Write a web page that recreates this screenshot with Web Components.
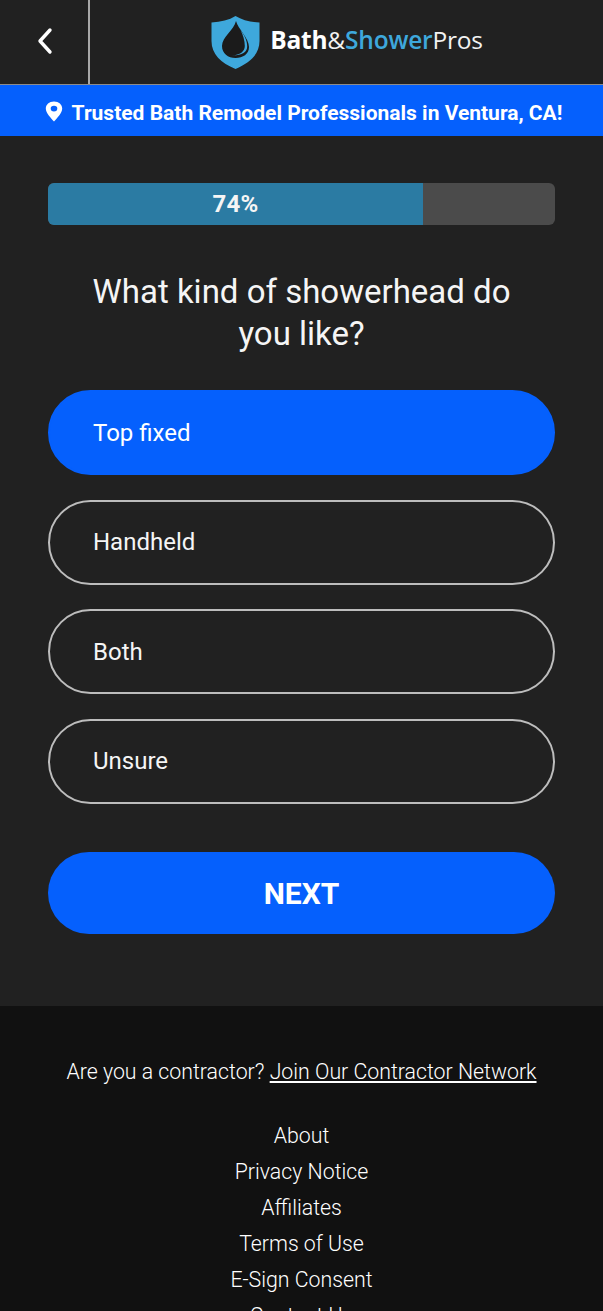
<!DOCTYPE html>
<html>
<head>
<meta charset="utf-8">
<title>Bath & Shower Pros</title>
<style>
    html, body{ margin: 0; height: 100%; overflow: hidden; background: #212121; }
    body{ font-family: Roboto, "Liberation Sans", sans-serif; color: #fff; }
</style>
</head>
<body>
<site-header></site-header>
<trust-banner>Trusted Bath Remodel Professionals in Ventura, CA!</trust-banner>
<quiz-step percent="74" question="What kind of showerhead do you like?">
    <quiz-option selected>Top fixed</quiz-option>
    <quiz-option>Handheld</quiz-option>
    <quiz-option>Both</quiz-option>
    <quiz-option>Unsure</quiz-option>
</quiz-step>
<site-footer></site-footer>

<script>
const templateHeader = document.createElement('template');
templateHeader.innerHTML = `
    <style>
        :host{
            display: grid;
            grid-template-columns: 90px 1fr;
            height: 84px;
            background: #212121;
            border-bottom: 1px solid #8b8b8b;
        }
        #back{
            display: flex;
            align-items: center;
            justify-content: center;
            padding: 0 0 3px 1px;
            border-right: 2px solid #a8a8a8;
        }
        #logo{
            display: flex;
            align-items: center;
            justify-content: center;
            gap: 10px;
            padding-left: 1px;
            font-family: "Open Sans", sans-serif;
            font-size: 24.5px;
            letter-spacing: -0.2px;
            color: #f2f2f2;
        }
        #name{ padding-bottom: 6px; }
        b{ font-weight: 700; color: #fff; }
        .blue{ color: #3ea8dc; font-weight: 600; }
        .thin{ font-weight: 400; }
    </style>
    <div id="back">
        <svg width="18" height="28" viewBox="0 0 18 28" fill="none" stroke="#fff" stroke-width="3.4" stroke-linecap="round" stroke-linejoin="round">
            <path d="M14 3 L4 14 L14 25"/>
        </svg>
    </div>
    <div id="logo">
        <svg width="49" height="53" viewBox="0 0 49 53">
            <path fill="#3ea8dc" d="M24.500 0 C31 4 39 6 48.500 6.500 L48.500 25 C48.500 38 39 47 24.500 53 C10 47 .5 38 .5 25 L.5 6.500 C10 6 18 4 24.500 0 Z"/>
            <path fill="#1b1b1b" d="M25 5 C27 13 38 22 38 31 C38 38 32 42 24.500 42 C17 42 11 37.500 11 30 C11 21 23 14 25 5 Z"/>
            <path fill="#3ea8dc" d="M29.500 14 C33.500 19 36.200 25 36.200 30.500 C36.200 36 31 39.700 21 39.500 C29 39 33.800 35.500 33.800 30 C33.800 24.500 32 19 29.500 14 Z"/>
        </svg>
        <span id="name"><b>Bath</b><span class="thin">&amp;</span><span class="blue">Shower</span><span class="thin">Pros</span></span>
    </div>
`;

class SiteHeader extends HTMLElement{
    constructor(){
        super();
        this.attachShadow({mode: 'open'});
        this.shadowRoot.appendChild(templateHeader.content.cloneNode(true));
    };
};
customElements.define("site-header", SiteHeader);

const templateBanner = document.createElement('template');
templateBanner.innerHTML = `
    <style>
        :host{
            display: flex;
            align-items: center;
            justify-content: center;
            gap: 9px;
            box-sizing: border-box;
            height: 51px;
            padding: 4px 0 0 4px;
            background: #0560fd;
            color: #fff;
            font-size: 21px;
            font-weight: 700;
            white-space: nowrap;
        }
        svg{ margin-top: -3px; }
    </style>
    <svg width="18" height="21" viewBox="0 0 18 24" preserveAspectRatio="none">
        <path fill="#fff" fill-rule="evenodd" d="M9 .5 C4.100 .5 .8 4.200 .8 8.600 C.8 14 6 19.500 9 23.500 C12 19.500 17.200 14 17.200 8.600 C17.200 4.200 13.900 .5 9 .5 Z M9 5.300 A3.300 3.300 0 1 1 9 11.900 A3.300 3.300 0 1 1 9 5.300 Z"/>
    </svg>
    <span><slot></slot></span>
`;

class TrustBanner extends HTMLElement{
    constructor(){
        super();
        this.attachShadow({mode: 'open'});
        this.shadowRoot.appendChild(templateBanner.content.cloneNode(true));
    };
};
customElements.define("trust-banner", TrustBanner);

const templateOption = document.createElement('template');
templateOption.innerHTML = `
    <style>
        :host{
            display: flex;
            align-items: center;
            box-sizing: border-box;
            height: 85px;
            padding: 0 43px;
            border: 2px solid #bdbdbd;
            border-radius: 43px;
            font-size: 24px;
            color: #f5f5f5;
        }
        :host([selected]){
            background: #0560fd;
            border-color: #0560fd;
            color: #fff;
        }
    </style>
    <slot></slot>
`;

class QuizOption extends HTMLElement{
    constructor(){
        super();
        this.attachShadow({mode: 'open'});
        this.shadowRoot.appendChild(templateOption.content.cloneNode(true));
    };
};
customElements.define("quiz-option", QuizOption);

const templateStep = document.createElement('template');
templateStep.innerHTML = `
    <style>
        :host{
            display: block;
            box-sizing: border-box;
            height: 870px;
            padding: 47px 48px 0;
            background: #212121;
        }
        #bar{
            height: 42px;
            background: #4b4b4b;
            border-radius: 6px;
            overflow: hidden;
        }
        #fill{
            display: flex;
            align-items: center;
            justify-content: center;
            height: 100%;
            background: #2b7ba3;
            font-size: 24px;
            font-weight: 700;
            letter-spacing: 0.3px;
            color: #f5f5f5;
        }
        h1{
            margin: 46px 0 35px;
            padding: 0 30px;
            font-size: 33px;
            line-height: 42px;
            font-weight: 400;
            text-align: center;
            color: #f5f5f5;
        }
        #options{
            display: grid;
            gap: 24.6px;
        }
        #next{
            display: flex;
            align-items: center;
            justify-content: center;
            box-sizing: border-box;
            height: 82px;
            margin-top: 48px;
            padding-top: 2px;
            background: #0560fd;
            border-radius: 41px;
            font-size: 30px;
            font-weight: 700;
            color: #fff;
        }
    </style>
    <div id="bar"><div id="fill"></div></div>
    <h1 id="question"></h1>
    <div id="options"><slot></slot></div>
    <div id="next">NEXT</div>
`;

class QuizStep extends HTMLElement{
    constructor(){
        super();
        this.attachShadow({mode: 'open'});
        this.shadowRoot.appendChild(templateStep.content.cloneNode(true));
    };

    connectedCallback(){
        let fill = this.shadowRoot.getElementById("fill");
        fill.style.width = this.getAttribute("percent") + "%";
        fill.textContent = this.getAttribute("percent") + "%";
        this.shadowRoot.getElementById("question").textContent = this.getAttribute("question");
    };
};
customElements.define("quiz-step", QuizStep);

const templateFooter = document.createElement('template');
templateFooter.innerHTML = `
    <style>
        :host{
            display: block;
            padding-top: 48px;
            background: #111;
            color: #fff;
            font-size: 21.3px;
            font-weight: 300;
            text-align: center;
        }
        p{
            margin: 0 0 28px;
            line-height: 36px;
        }
        u{ text-underline-offset: 2px; }
        ul{
            list-style: none;
            margin: 0;
            padding: 0;
            line-height: 36px;
        }
    </style>
    <p>Are you a contractor? <u>Join Our Contractor Network</u></p>
    <ul>
        <li>About</li>
        <li>Privacy Notice</li>
        <li>Affiliates</li>
        <li>Terms of Use</li>
        <li>E-Sign Consent</li>
        <li>Contact Us</li>
    </ul>
`;

class SiteFooter extends HTMLElement{
    constructor(){
        super();
        this.attachShadow({mode: 'open'});
        this.shadowRoot.appendChild(templateFooter.content.cloneNode(true));
    };
};
customElements.define("site-footer", SiteFooter);
</script>
</body>
</html>
